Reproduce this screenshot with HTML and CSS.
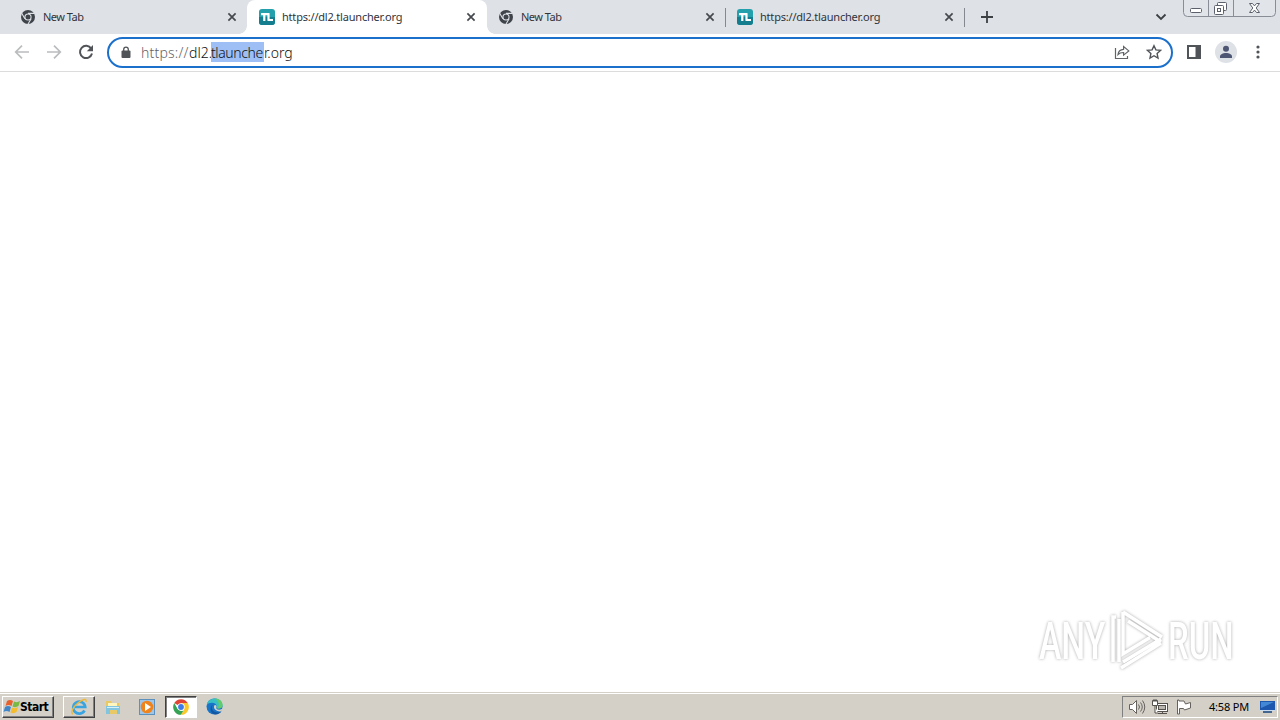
FILE: index.html
```
<!DOCTYPE html>
<html lang="en">
<head>
    <meta charset="UTF-8">
    <title>https://dl2.tlauncher.org</title>
    <link rel="stylesheet" href="styles.css">
</head>
<body>
    <!-- Shared icons -->
    <svg class="defs" width="0" height="0">
        <symbol id="chrome-mono" viewBox="0 0 16 16">
            <circle cx="8" cy="8" r="7" fill="#3f444b"/>
            <circle cx="8" cy="8" r="3.6" fill="#dee1e6"/>
            <path d="M8 4.4h6.4M4.9 9.8L1.7 4.3M11.1 9.8L7.9 15.2" stroke="#dee1e6" stroke-width="1.1"/>
            <circle cx="8" cy="8" r="2.5" fill="#3f444b"/>
        </symbol>
        <symbol id="tl" viewBox="0 0 16 16">
            <rect width="16" height="16" rx="3" fill="#23a0ac"/>
            <path d="M0 8h16v5a3 3 0 0 1-3 3H3a3 3 0 0 1-3-3z" fill="#147e8e"/>
            <path d="M2 5.200h8.500M5.300 5v7M9.500 5v6M8.500 11h5.500" stroke="#fff" stroke-width="2.200" fill="none"/>
        </symbol>
        <symbol id="close" viewBox="0 0 10 10">
            <path d="M1.4 1.4l7.2 7.2M8.6 1.4L1.4 8.6" stroke="#45494e" stroke-width="1.7"/>
        </symbol>
    </svg>

    <div class="tabstrip">
        <div class="tab">
            <svg class="favicon"><use href="#chrome-mono"/></svg>
            <span class="title short">New Tab</span>
            <svg class="close"><use href="#close"/></svg>
        </div>
        <div class="tab active">
            <svg class="favicon"><use href="#tl"/></svg>
            <span class="title">https://dl2.tlauncher.org</span>
            <svg class="close"><use href="#close"/></svg>
        </div>
        <div class="tab line">
            <svg class="favicon"><use href="#chrome-mono"/></svg>
            <span class="title short">New Tab</span>
            <svg class="close"><use href="#close"/></svg>
        </div>
        <div class="tab line">
            <svg class="favicon"><use href="#tl"/></svg>
            <span class="title">https://dl2.tlauncher.org</span>
            <svg class="close"><use href="#close"/></svg>
        </div>
        <svg class="new-tab" width="12" height="12" viewBox="0 0 12 12"><path d="M6 0v12M0 6h12" stroke="#3c4043" stroke-width="1.8"/></svg>
        <svg class="tab-search" width="12" height="8" viewBox="0 0 12 8"><path d="M1.5 1.5L6 6l4.5-4.5" stroke="#3c4043" stroke-width="1.8" fill="none"/></svg>
        <svg class="window-buttons" width="94" height="18" viewBox="0 0 94 18" fill="none">
            <path d="M.5 0v12.500a4 4 0 0 0 4 4h84a4 4 0 0 0 4-4V0" fill="#e1e4e9" stroke="#888d96"/>
            <path d="M25.500 0v16M50.500 0v16" stroke="#888d96"/>
            <rect x="7.500" y="8.500" width="11" height="4" rx="1" fill="#fff" stroke="#5b606b"/>
            <rect x="34.500" y="2.500" width="9" height="8" rx="1" fill="#fff" stroke="#5b606b"/>
            <rect x="31.500" y="5.500" width="9" height="9" rx="1" fill="#fff" stroke="#5b606b"/>
            <rect x="34.500" y="8.500" width="3" height="3" stroke="#5b606b"/>
            <path d="M66.500 3.500h3l2 2.400 2-2.400h3l-3.300 4.500 3.300 4.500h-3l-2-2.400-2 2.400h-3l3.300-4.500z" fill="#fff" stroke="#5b606b"/>
        </svg>
    </div>

    <div class="toolbar">
        <svg class="nav" width="16" height="16" viewBox="0 0 16 16"><path d="M15 8H2M8 1.700L1.700 8 8 14.300" stroke="#babcbe" stroke-width="1.700" fill="none"/></svg>
        <svg class="nav" width="16" height="16" viewBox="0 0 16 16"><path d="M1 8h13M8 1.700L14.300 8 8 14.300" stroke="#babcbe" stroke-width="1.700" fill="none"/></svg>
        <svg class="nav" width="16" height="16" viewBox="0 0 16 16"><path d="M13.200 4.600A6.100 6.100 0 1 0 14 9.500" stroke="#505458" stroke-width="2" fill="none"/><path d="M15 1v6.200H8.800z" fill="#505458"/></svg>
        <div class="omnibox">
            <svg class="lock" width="10" height="13" viewBox="0 0 10 13"><rect x="0.500" y="4.500" width="9" height="7.500" rx="1" fill="#505458"/><path d="M2.700 5V3.400a2.300 2.300 0 0 1 4.600 0V5" stroke="#505458" stroke-width="1.300" fill="none"/></svg>
            <span class="url"><span class="scheme">https://</span><span class="sub">dl2.</span><span class="selected">tlaunche</span><span class="rest">r.org</span></span>
            <svg class="share" width="16" height="16" viewBox="0 0 16 16" fill="none" stroke="#606468" stroke-width="1.200"><path d="M1.500 4v10.500h12V12"/><path d="M4 10.500c.4-3.500 2.300-5 5.600-5.200V2.600l5.200 4.300-5.200 4.200V8.500C7.200 8.400 5.500 9 4 10.500z"/></svg>
            <svg class="star" width="16" height="16" viewBox="0 0 16 16"><path d="M8 1.700l1.900 4.200 4.600.5-3.400 3.100.9 4.500L8 11.700 4 14l.9-4.500L1.500 6.400l4.600-.5z" stroke="#505458" stroke-width="1.400" fill="none"/></svg>
        </div>
        <svg class="panel" width="14" height="14" viewBox="0 0 14 14"><rect x="1" y="1" width="12" height="12" fill="#fff" stroke="#505458" stroke-width="2"/><path d="M8.500 1H13v12H8.500z" fill="#505458"/></svg>
        <svg class="avatar" width="22" height="22" viewBox="0 0 22 22"><circle cx="11" cy="11" r="11" fill="#dee1e6"/><circle cx="11" cy="7.800" r="3" fill="#4d5672"/><path d="M5 17v-1.500c0-2.200 3-3.500 6-3.500s6 1.300 6 3.500V17z" fill="#4d5672"/></svg>
        <svg class="menu" width="4" height="14" viewBox="0 0 4 14" fill="#505458"><circle cx="2" cy="2" r="1.600"/><circle cx="2" cy="7" r="1.600"/><circle cx="2" cy="12" r="1.600"/></svg>
    </div>

    <div class="page">
        <svg class="watermark" width="220" height="74" viewBox="0 0 220 74">
            <g class="mark">
                <text transform="translate(9 55) scale(.66 1)">ANY</text>
                <text transform="translate(138 55) scale(.645 1)">RUN</text>
                <path d="M93 8l39 25M93 8v42l27-16.500M98 17l33 21M86 13h-3v45M93 58l38-23M91 64l40-25M89 15v43"/>
            </g>
        </svg>
    </div>

    <div class="taskbar">
        <div class="task start">
            <svg width="18" height="16" viewBox="0 0 18 16">
                <path d="M4 2q3-2 6 0L8.500 7q-3-2-6 0z" fill="#e8602c"/>
                <path d="M11 2.500q3 1.500 6-.5l-1.500 5q-3 2-6 .5z" fill="#78b943"/>
                <path d="M2 8q3-2 6 0l-1.500 5q-3-2-6 0z" fill="#3f85c8"/>
                <path d="M9 8.500q3 1.500 6-.5l-1.500 5q-3 2-6 .5z" fill="#f5bd2b"/>
            </svg>
            <span>Start</span>
        </div>
        <div class="task ie">
            <svg width="18" height="18" viewBox="0 0 18 18" fill="none">
                <path d="M14.500 12.500A6 6 0 1 1 15.200 9H5" stroke="#39a4e0" stroke-width="2.700"/>
                <path d="M3 16C0 15 3 9 8 5s9-5 8-1" stroke="#edb93b" stroke-width="1.400"/>
            </svg>
        </div>
        <div class="task flat explorer">
            <svg width="18" height="18" viewBox="0 0 18 18">
                <path d="M2 3h5l1 2h7v11H2z" fill="#e9c866"/>
                <path d="M4 5h9v5H4z" fill="#fff5bd"/>
                <path d="M2 8h14v8h-3v-4H6v4H2z" fill="#83c5df"/>
                <path d="M3 9h12v1H3z" fill="#d4f0f8"/>
            </svg>
        </div>
        <div class="task flat player">
            <svg width="16" height="16" viewBox="0 0 16 16">
                <rect x=".5" y=".5" width="15" height="15" fill="#9fc6e8" stroke="#5d91bd"/>
                <circle cx="8" cy="8" r="6.300" fill="#ef841d"/><path d="M6 4l6 4-6 4z" fill="#fff"/>
            </svg>
        </div>
        <div class="task pressed">
            <svg width="16" height="16" viewBox="0 0 16 16">
                <circle cx="8" cy="8" r="7.800" fill="#fff"/>
                <path d="M8 8L1.240 4.100A7.800 7.800 0 0 1 14.760 4.100z" fill="#df4435"/>
                <path d="M8 8V4.100h6.760A7.800 7.800 0 0 1 8 15.800l3.400-6z" fill="#fbc829"/>
                <path d="M1.240 4.100l3.400 5.800L8 11.800h2.300L8 15.800A7.800 7.800 0 0 1 1.240 4.100z" fill="#35a353"/>
                <circle cx="8" cy="8" r="3.700" fill="#fff"/><circle cx="8" cy="8" r="2.900" fill="#3e7de8"/>
            </svg>
        </div>
        <div class="task flat edge">
            <svg width="17" height="17" viewBox="0 0 17 17">
                <circle cx="8.500" cy="8.500" r="8" fill="#1774c9"/>
                <path d="M.8 7C2-2 16-1.500 16.500 7c0 4-4.500 4.200-6 2.700 1-2.700-1.300-5-4.500-5C3.500 4.700 1.800 5.500.8 7z" fill="#39bfc3"/>
                <path d="M9 .6c4.500 0 7.500 3 7.500 6.400 0 3.300-3 4-5 3.300C14 7 13 3.500 9 .6z" fill="#62cc69"/>
                <path d="M7 6.500c-3 3.500 0 8 5 8 1.500 0 2.700-.5 3.700-1.200-1.200 2-3.600 3.200-6.200 3.200C4 16.300 3 8.500 7 6.500z" fill="#1457a0"/>
                <path d="M8.700 6.900c1.600-.2 2.300 1.300 1.500 2.800 0 1.900 3 2.700 5.600 1.300l1.200 1-3 1.500c-4.500-.2-7.500-4-5.300-6.600z" fill="#d4d0c8"/>
            </svg>
        </div>
        <div class="tray">
            <svg class="volume" width="18" height="16" viewBox="0 0 18 16" fill="none" stroke="#65625e">
                <path d="M1.500 5.500h3l4-4v13l-4-4h-3z" fill="#fff"/>
                <path d="M10.500 5.500q2 2.500 0 5M12.500 3.500q3.500 4.500 0 9M14.500 1.500q4.500 6.500 0 13"/>
            </svg>
            <svg class="network" width="17" height="16" viewBox="0 0 17 16" fill="#fff" stroke="#55524e">
                <rect x="4.500" y="4.500" width="11" height="8"/><rect x="6.500" y="6.500" width="7" height="4" fill="#b9b6b0"/>
                <path d="M6 14.500h9M10.500 12v2"/><path d="M.5 1.500h5v5h-5zM2 0v3M4 0v3M3 7v7h3" />
            </svg>
            <svg class="flag" width="16" height="16" viewBox="0 0 16 16" fill="#fff" stroke="#65625e">
                <path d="M1.500 1v14h2V9.500h4l1 1.500 6-2V3.500L9.500 5l-1.500-3h-5V1z"/>
            </svg>
            <span class="clock">4:58 PM</span>
            <svg class="desktop" width="16" height="14" viewBox="0 0 16 14">
                <path d="M0 1h15v9H0z" fill="#1d58ae"/><path d="M1 2h13L1 8z" fill="#4388d4"/>
                <path d="M0 10h15v1H0z" fill="#c9dcf0"/><path d="M3 11h9v2H3z" fill="#426690"/>
            </svg>
        </div>
    </div>
</body>
</html>
```
FILE: styles.css
```
* {
    box-sizing: border-box;
}
body {
    margin: 0;
    width: 1280px;
    height: 720px;
    display: flex;
    flex-direction: column;
    overflow: hidden;
    background: #fff;
    font-family: "Noto Sans", sans-serif;
    color: #222;
}
svg {
    display: block;
    flex: none;
}
.defs {
    position: absolute;
}

/* Tabs */
.tabstrip {
    height: 34px;
    flex: none;
    display: flex;
    align-items: flex-start;
    background: #dee1e6;
    padding-left: 8px;
}
.tab {
    position: relative;
    width: 239px;
    height: 34px;
    display: flex;
    align-items: center;
    padding: 0 10px 0 12px;
}
.tab.active {
    width: 240px;
    padding-right: 11px;
    background: #fff;
    border-radius: 8px 8px 0 0;
}
.tab.active::before,
.tab.active::after {
    content: "";
    position: absolute;
    bottom: 0;
    width: 8px;
    height: 8px;
}
.tab.active::before {
    left: -8px;
    background: radial-gradient(circle at 0 0, transparent 7.5px, #fff 8px);
}
.tab.active::after {
    right: -8px;
    background: radial-gradient(circle at 100% 0, transparent 7.5px, #fff 8px);
}
.tab.line {
    padding-left: 11px;
    padding-right: 11px;
}
.tab.line::after {
    content: "";
    position: absolute;
    right: 0;
    top: 8px;
    width: 1px;
    height: 19px;
    background: #85898f;
}
.favicon {
    width: 16px;
    height: 16px;
}
.title {
    width: 121px;
    margin-left: 7px;
    padding-bottom: 2px;
    font-size: 11px;
    letter-spacing: -0.2px;
    white-space: nowrap;
    color: #30343a;
}
.title.short {
    letter-spacing: -0.5px;
}
.close {
    width: 10px;
    height: 10px;
    margin-left: auto;
}
.new-tab {
    margin: 11px 0 0 16px;
}
.tab-search {
    margin: 13px 16px 0 auto;
}
.window-buttons {
    margin-right: 3px;
}

/* Toolbar */
.toolbar {
    height: 38px;
    flex: none;
    display: flex;
    align-items: center;
    padding: 0 20px 1px 14px;
    border-bottom: 1px solid #dcdcdc;
}
.nav {
    margin-right: 16px;
}
.nav + .nav + .nav {
    margin-right: 13px;
}
.omnibox {
    width: 1066px;
    height: 31px;
    display: flex;
    align-items: center;
    border: 2px solid #1b70cc;
    border-radius: 16px;
    padding: 0 9px 0 12px;
}
.url {
    display: flex;
    margin-left: 10px;
    font-size: 14px;
    height: 20px;
    line-height: 22px;
    font-weight: 300;
    white-space: nowrap;
    color: #111;
}
.scheme {
    width: 48px;
    letter-spacing: 0.2px;
    color: #5f6368;
}
.sub {
    width: 22px;
}
.selected {
    width: 53px;
    letter-spacing: -0.4px;
    background: #9dbff5;
}
.share {
    margin-left: auto;
}
.star {
    margin-left: 16px;
}
.panel {
    margin-left: 14px;
}
.avatar {
    margin-left: 14px;
}
.menu {
    margin-left: auto;
}

/* Blank page with the watermark in its corner */
.page {
    flex: 1;
    display: flex;
    justify-content: flex-end;
    align-items: flex-end;
    padding: 0 30px 14px 0;
}
.mark {
    fill: #fff;
    filter: drop-shadow(0 0 1.5px #aaa);
    font-family: Roboto, sans-serif;
    font-size: 51px;
    font-weight: 500;
}
.mark path {
    fill: none;
    stroke: #fff;
    stroke-width: 3.5;
}

/* Taskbar */
.taskbar {
    height: 28px;
    flex: none;
    display: flex;
    align-items: center;
    background: #d4d0c8;
    border-top: 1px solid #d4d0c8;
    box-shadow: inset 0 1px #fff;
    padding: 0 2px;
}
.task {
    width: 32px;
    height: 22px;
    display: flex;
    align-items: center;
    justify-content: center;
    border: 1px solid;
    border-color: #fff #404040 #404040 #fff;
    box-shadow: inset -1px -1px #808080;
}
.start {
    width: 52px;
    justify-content: flex-start;
    font: bold 12px "DejaVu Sans Condensed", "DejaVu Sans", sans-serif;
    letter-spacing: -0.5px;
    color: #000;
}
.start span {
    margin-left: -1px;
}
.ie {
    margin-left: 9px;
}
.flat {
    border-color: transparent;
    box-shadow: none;
}
.explorer,
.player {
    margin-left: 2px;
}
.edge {
    margin-left: 1px;
}
.pressed {
    margin-left: 2px;
    background: #fff;
    border-color: #404040 #fff #fff #404040;
    box-shadow: inset 1px 1px #808080;
}
.tray {
    width: 156px;
    height: 22px;
    margin-left: auto;
    display: flex;
    align-items: center;
    padding: 0 1px 0 5px;
    border: 1px solid;
    border-color: #808080 #fff #fff #808080;
}
.network {
    margin-left: 6px;
}
.flag {
    margin-left: 7px;
}
.clock {
    width: 40px;
    margin-left: auto;
    font-size: 11px;
    letter-spacing: -0.2px;
    white-space: nowrap;
    color: #000;
}
.desktop {
    margin-left: 11px;
}
```
